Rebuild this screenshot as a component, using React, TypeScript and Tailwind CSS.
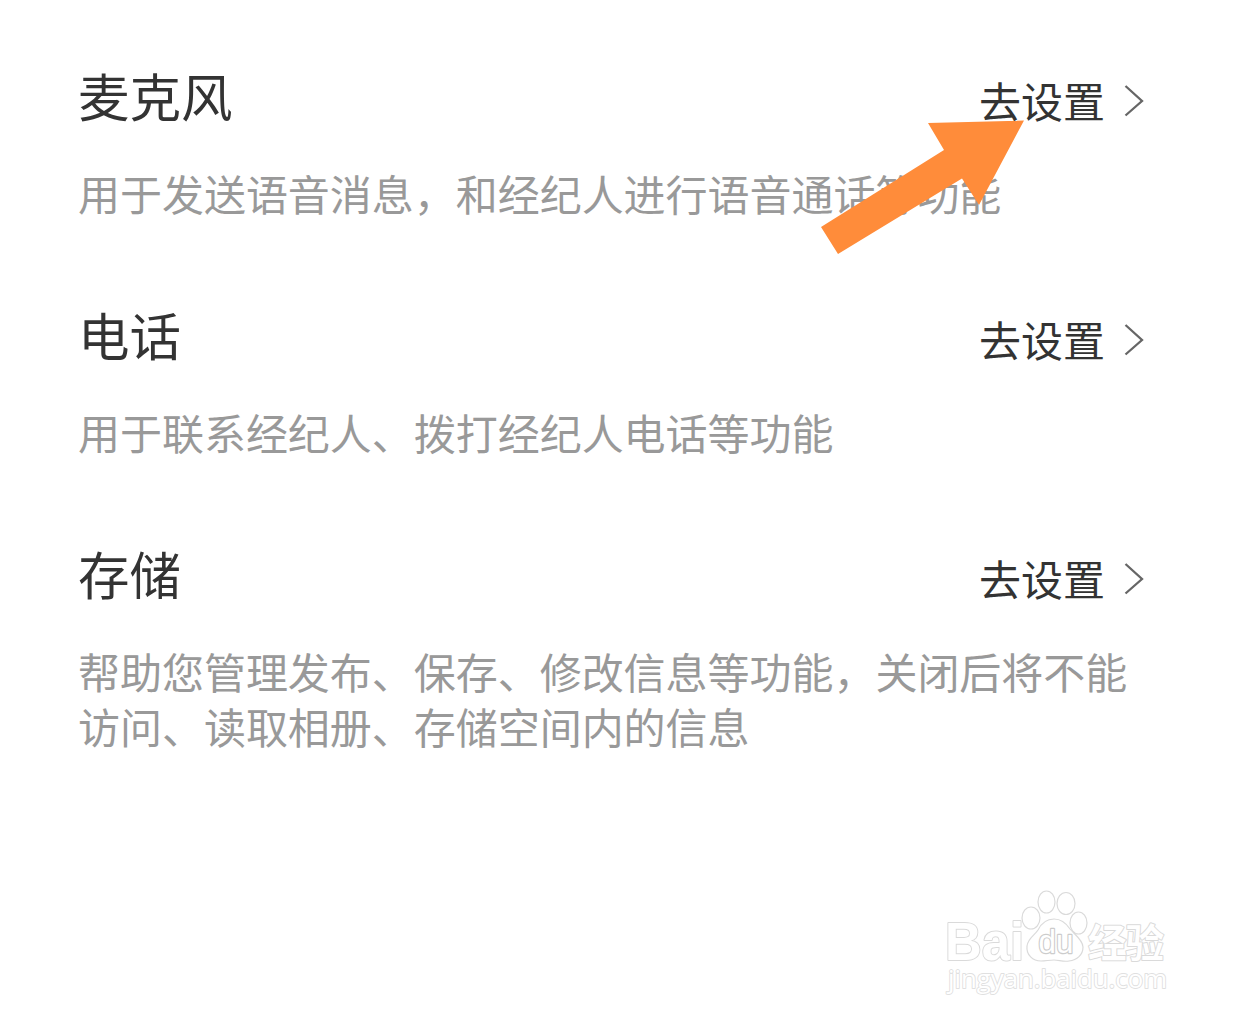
const PERMISSIONS = [
  { name: "麦克风", desc: "用于发送语音消息，和经纪人进行语音通话等功能" },
  { name: "电话", desc: "用于联系经纪人、拨打经纪人电话等功能" },
  { name: "存储", desc: "帮助您管理发布、保存、修改信息等功能，关闭后将不能访问、读取相册、存储空间内的信息" },
];

function PermissionRow({ name, desc }: { name: string; desc: string }) {
  return (
    <section>
      <div className="flex h-[72px] items-center justify-between">
        <h2 className="text-[51.5px] leading-[72px] text-[#333]">{name}</h2>
        <button className="mt-[9px] mr-[7px] flex items-center text-[42px] leading-[60px] text-[#333]">
          去设置
          <svg className="mt-[5px] ml-[19px] h-9 w-5" viewBox="0 0 20 36" fill="none" stroke="#666" strokeWidth="2.3">
            <path d="M1.5 2 18 17 1.5 31.5" />
          </svg>
        </button>
      </div>
      <p className="mt-[34px] text-[42px] leading-[55px] tracking-[-0.03px] text-[#999]">{desc}</p>
    </section>
  );
}

// outlined logo: the outer contour of each glyph is stroked, the white fill sits on top
function Watermark() {
  return (
    <svg
      className="absolute top-[880px] left-[930px] h-[130px] w-[250px] font-['Liberation_Sans',sans-serif]"
      viewBox="0 0 250 130"
      fill="#fff"
      stroke="#dadada"
      strokeWidth="1.2"
      strokeLinejoin="round"
    >
      <text
        x="15"
        y="79.5"
        fontSize="53"
        fontWeight="700"
        textLength="79"
        lengthAdjust="spacingAndGlyphs"
        strokeWidth="2"
        paintOrder="stroke"
      >
        Bai
      </text>
      <ellipse cx="101" cy="38" rx="9" ry="11" />
      <ellipse cx="116.5" cy="22" rx="8.5" ry="11" />
      <ellipse cx="136" cy="23.5" rx="9" ry="11" />
      <ellipse cx="148.5" cy="43" rx="8.5" ry="11" />
      <path d="M124 39c-8 0-13 5-16 11-3 5-10 8-11 16-1 9 6 15 14 15 5 0 8-1 13-1s9 2 15 1c8-1 14-6 14-14 0-7-9-13-13-18-4-6-9-10-16-10Z" />
      <text x="108.500" y="73" fontSize="33" textLength="35" lengthAdjust="spacingAndGlyphs" strokeWidth="2.4" paintOrder="stroke" stroke="#ccc">
        du
      </text>
      <text
        className="font-['Noto_Sans_CJK_SC',sans-serif]"
        x="158"
        y="76.500"
        fontSize="38.5"
        fontWeight="700"
        textLength="76"
        strokeWidth="2"
        paintOrder="stroke"
      >
        经验
      </text>
      <text
        className="font-['Open_Sans',sans-serif]"
        x="18"
        y="108"
        fontSize="26"
        fontWeight="500"
        textLength="219"
        lengthAdjust="spacingAndGlyphs"
        strokeWidth="1.8"
        paintOrder="stroke"
        stroke="#e0e0e0"
      >
        jingyan.baidu.com
      </text>
    </svg>
  );
}

export default function App() {
  return (
    <main className="relative h-[1023px] w-full overflow-hidden bg-white pt-[59px] pr-[84px] pl-[78px] font-['Noto_Sans_CJK_SC',sans-serif]">
      <div className="flex flex-col gap-[78px]">
        {PERMISSIONS.map((p) => (
          <PermissionRow key={p.name} {...p} />
        ))}
      </div>
      <svg className="absolute top-[110px] left-[810px] h-[160px] w-[230px]" viewBox="810 110 230 160" fill="#ff8c3a">
        <path d="M1024 120.500 928 123 944 150 821 227 838 254 962 178.500 979 205Z" />
      </svg>
      <Watermark />
    </main>
  );
}
